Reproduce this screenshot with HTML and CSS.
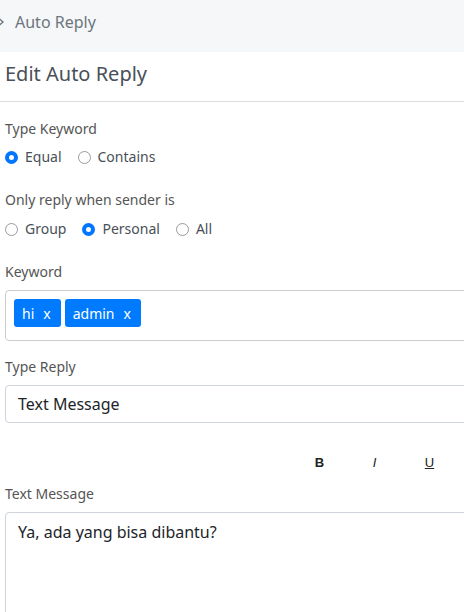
FILE: index.html
```html
<!DOCTYPE html>
<html lang="en">
<head>
    <meta charset="UTF-8">
    <meta name="viewport" content="width=device-width, initial-scale=1.0">
    <title>Edit Auto Reply</title>
    <link rel="stylesheet" href="styles.css">
</head>
<body>
    <!-- Breadcrumb -->
    <div class="breadcrumb">
        <svg class="chevron" width="6" height="8" viewBox="0 0 6 8"><path d="M0.5 1 L4 4 L0.5 7" fill="none" stroke="#6c757d" stroke-width="1.4"/></svg>
        <span>Auto Reply</span>
    </div>

    <div class="card">
        <h2 class="card-title">Edit Auto Reply</h2>

        <form class="form">
            <label class="field-label">Type Keyword</label>
            <div class="radio-row">
                <label class="radio"><input type="radio" name="type" checked> Equal</label>
                <label class="radio"><input type="radio" name="type"> Contains</label>
            </div>

            <label class="field-label gap-top">Only reply when sender is</label>
            <div class="radio-row row-second">
                <label class="radio"><input type="radio" name="sender"> Group</label>
                <label class="radio"><input type="radio" name="sender" checked> Personal</label>
                <label class="radio"><input type="radio" name="sender"> All</label>
            </div>

            <label class="field-label gap-top">Keyword</label>
            <div class="tags-input">
                <span class="tag">hi <span class="tag-x">x</span></span>
                <span class="tag">admin <span class="tag-x">x</span></span>
            </div>

            <label class="field-label reply-label">Type Reply</label>
            <div class="select">Text Message</div>

            <div class="toolbar">
                <button type="button" class="tb-btn"><b>B</b></button>
                <button type="button" class="tb-btn"><i>I</i></button>
                <button type="button" class="tb-btn"><u>U</u></button>
            </div>

            <label class="field-label">Text Message</label>
            <div class="textarea">Ya, ada yang bisa dibantu?</div>
        </form>
    </div>
</body>
</html>
```

FILE: styles.css
```css
/* Base */
body {
    margin: 0;
    width: 640px;
    background-color: #fff;
    font-family: "Segoe UI", "Noto Sans", sans-serif;
    color: #495057;
    overflow: hidden;
}
.breadcrumb {
    display: flex;
    align-items: center;
    gap: 10px;
    height: 44px;
    padding-bottom: 8px;
    background-color: #f6f7f9;
    font-size: 16px;
    color: #6c757d;
}
.chevron {
    margin-left: -1px;
}
.card-title {
    margin: 0;
    padding: 10px 5px 15px;
    font-size: 20px;
    line-height: 24px;
    font-weight: 400;
    color: #495057;
    border-bottom: 1px solid #dcdcdc;
}
.form {
    display: flex;
    flex-direction: column;
    padding: 17px 5px 0;
}
.field-label {
    font-size: 14px;
    line-height: 20px;
    color: #555;
}
.gap-top {
    margin-top: 23px;
}
.radio-row {
    display: flex;
    gap: 16px;
    margin-top: 8px;
    font-size: 14px;
    line-height: 20px;
}
.row-second {
    margin-top: 9px;
}
.radio {
    display: flex;
    align-items: center;
    gap: 7px;
}
.radio input {
    appearance: none;
    box-sizing: border-box;
    margin: 0;
    width: 13px;
    height: 13px;
    border: 1px solid #9a9a9a;
    border-radius: 50%;
    background-color: #fff;
}
.radio input:checked {
    border: 4px solid #0075ff;
}
.tags-input {
    display: flex;
    gap: 4px;
    margin-top: 8px;
    padding: 8px 8px 13px;
    border: 1px solid #ccc;
    border-radius: 4px;
}
.tag {
    display: inline-flex;
    align-items: center;
    height: 28px;
    padding: 0 10px 0 8px;
    background-color: #007bff;
    color: #fff;
    border-radius: 3px;
    font-size: 14px;
}
.tag-x {
    margin-left: 9px;
}
.reply-label {
    margin-top: 16px;
}
.select {
    display: flex;
    align-items: center;
    height: 36px;
    margin-top: 8px;
    padding: 0 12px;
    border: 1px solid #ced4da;
    border-radius: 4px;
    font-size: 16px;
    color: #212529;
}
.toolbar {
    display: flex;
    margin-top: 24px;
    margin-bottom: 7px;
    padding-left: 287px;
}
.tb-btn {
    width: 55px;
    height: 30px;
    padding: 0;
    background: none;
    border: none;
    font-family: "Liberation Sans", Arial, sans-serif;
    font-size: 13px;
    color: #222;
}
.textarea {
    height: 120px;
    margin-top: 8px;
    padding: 8px 12px;
    border: 1px solid #ced4da;
    border-radius: 4px;
    font-size: 16px;
    color: #212529;
}
```
